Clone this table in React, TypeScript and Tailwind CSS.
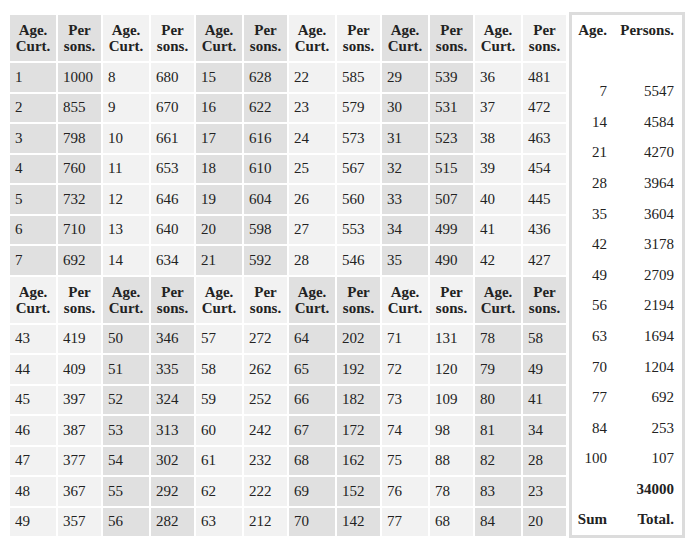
import React from 'react';

const top = [
  [1, 1000, 8, 680, 15, 628, 22, 585, 29, 539, 36, 481],
  [2, 855, 9, 670, 16, 622, 23, 579, 30, 531, 37, 472],
  [3, 798, 10, 661, 17, 616, 24, 573, 31, 523, 38, 463],
  [4, 760, 11, 653, 18, 610, 25, 567, 32, 515, 39, 454],
  [5, 732, 12, 646, 19, 604, 26, 560, 33, 507, 40, 445],
  [6, 710, 13, 640, 20, 598, 27, 553, 34, 499, 41, 436],
  [7, 692, 14, 634, 21, 592, 28, 546, 35, 490, 42, 427],
];

const bottom = [
  [43, 419, 50, 346, 57, 272, 64, 202, 71, 131, 78, 58],
  [44, 409, 51, 335, 58, 262, 65, 192, 72, 120, 79, 49],
  [45, 397, 52, 324, 59, 252, 66, 182, 73, 109, 80, 41],
  [46, 387, 53, 313, 60, 242, 67, 172, 74, 98, 81, 34],
  [47, 377, 54, 302, 61, 232, 68, 162, 75, 88, 82, 28],
  [48, 367, 55, 292, 62, 222, 69, 152, 76, 78, 83, 23],
  [49, 357, 56, 282, 63, 212, 70, 142, 77, 68, 84, 20],
];

const totals = [
  [7, 5547], [14, 4584], [21, 4270], [28, 3964], [35, 3604], [42, 3178], [49, 2709],
  [56, 2194], [63, 1694], [70, 1204], [77, 692], [84, 253], [100, 107],
];

const DARK = 'bg-[#e0e0e0]';
const LIGHT = 'bg-[#f2f2f2]';

// top block shades pairs 1,3,5; bottom block shades pairs 2,4,6
const shade = (col: number, lower: boolean) => {
  const pair = Math.floor(col / 2);
  const dark = lower ? pair % 2 === 1 : pair % 2 === 0;
  return dark ? DARK : LIGHT;
};

const Block = ({ rows, lower }: { rows: number[][]; lower: boolean }) => (
  <>
    {Array.from({ length: 12 }).map((_, c) => (
      <div
        key={`h${c}`}
        className={`${shade(c, lower)} flex flex-col items-center justify-center font-bold leading-[16px]`}
      >
        {c % 2 === 0 ? (
          <>
            <span>Age.</span>
            <span>Curt.</span>
          </>
        ) : (
          <>
            <span>Per</span>
            <span>sons.</span>
          </>
        )}
      </div>
    ))}
    {rows.map((r, i) =>
      r.map((v, c) => (
        <div key={`${i}-${c}`} className={`${shade(c, lower)} flex items-center pl-[5px] pb-[1px]`}>
          {v}
        </div>
      ))
    )}
  </>
);

export default function App() {
  return (
    <div className="w-[692px] h-[546px] bg-white text-[15px] text-[#222] font-[Liberation_Serif,serif] flex items-start pt-[12px] pl-[10px]">
      <div className="mt-[3px] grid grid-cols-[repeat(6,46px_43px)] grid-rows-[46px_repeat(7,28.5px)_46px_repeat(7,28.5px)] gap-[2px]">
        <Block rows={top} lower={false} />
        <Block rows={bottom} lower />
      </div>

      <div className="ml-[3px] w-[116px] h-[526px] border-[3px] border-[#dcdcdc] bg-white grid grid-cols-[39px_1fr] grid-rows-[repeat(17,1fr)]">
        <div className="flex items-center justify-end pr-[4px] font-bold">Age.</div>
        <div className="flex items-center justify-end pr-[8px] font-bold">Persons.</div>
        <div />
        <div />
        {totals.map(([a, p]) => (
          <React.Fragment key={a}>
            <div className="flex items-center justify-end pr-[4px]">{a}</div>
            <div className="flex items-center justify-end pr-[8px]">{p}</div>
          </React.Fragment>
        ))}
        <div />
        <div className="flex items-center justify-end pr-[8px] font-bold">34000</div>
        <div className="flex items-center justify-end pr-[4px] font-bold">Sum</div>
        <div className="flex items-center justify-end pr-[8px] font-bold">Total.</div>
      </div>
    </div>
  );
}
